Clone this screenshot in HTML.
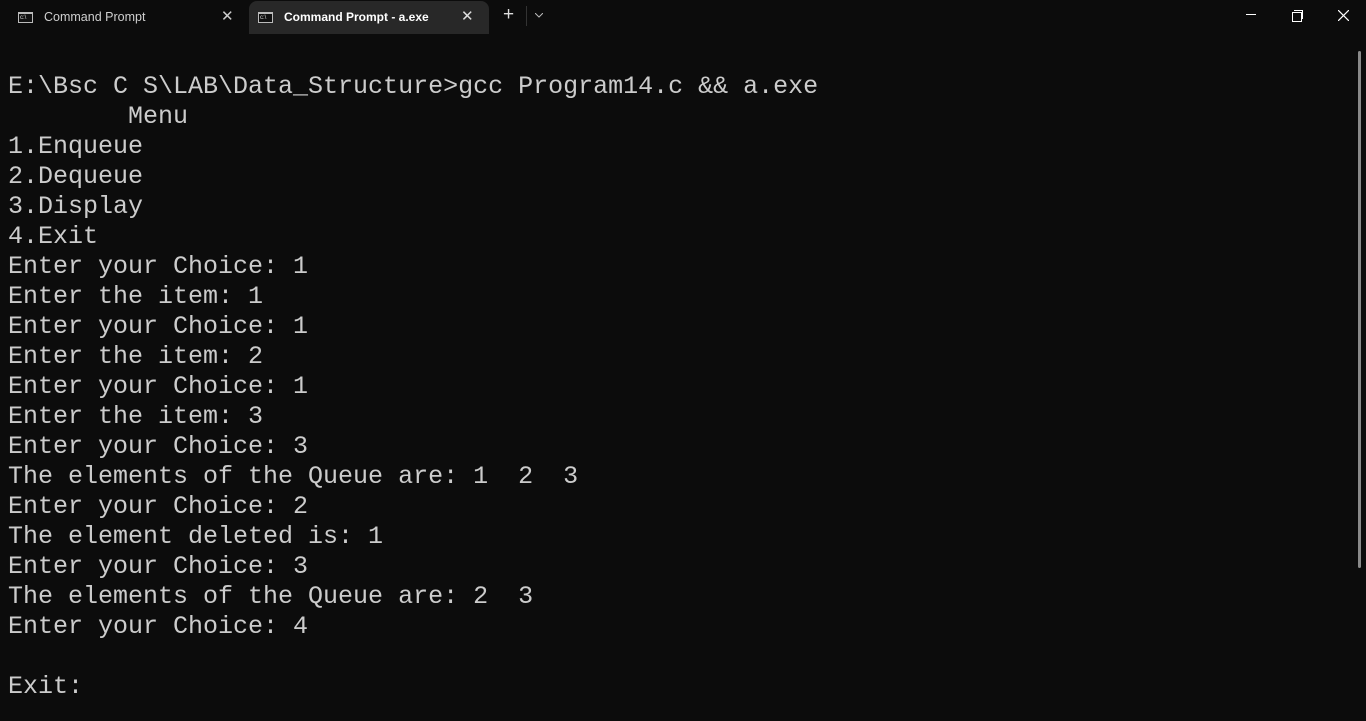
<!DOCTYPE html>
<html><head><style>
html,body{margin:0;padding:0;width:1366px;height:721px;background:#0c0c0c;overflow:hidden;font-family:"Liberation Sans",sans-serif}
.bar{position:absolute;top:0;left:0;width:1366px;height:34px;background:#0c0c0c}
.tab{position:absolute;top:1px;height:33px;color:#cfcfcf;font-size:12.5px;line-height:32px}
.tab.active{background:#282828;border-radius:8px 8px 0 0;color:#fff}
.ic{position:absolute;top:11px;width:15px;height:11px;border:1px solid #bbb;border-top-width:2px;background:#111;box-sizing:border-box}
.ic:after{content:"c:\\";position:absolute;left:1px;top:-12px;font-size:6px;color:#ddd}
pre{position:absolute;left:8px;top:72px;margin:0;font-family:"Liberation Mono",monospace;font-size:25px;line-height:30px;color:#cccccc;letter-spacing:0}
.sb{position:absolute;left:1358px;top:51px;width:3px;height:517px;background:#8a8a8a;border-radius:2px}
</style></head><body>
<div class="bar">
 <div class="tab" style="left:0;width:248px"><div class="ic" style="left:18px"></div><span style="position:absolute;left:44px">Command Prompt</span><span style="position:absolute;left:221px;font-size:15px;color:#ccc">✕</span></div>
 <div class="tab active" style="left:249px;width:240px"><div class="ic" style="left:9px"></div><span style="position:absolute;left:35px;font-weight:bold;font-size:12px">Command Prompt - a.exe</span><span style="position:absolute;left:212px;font-size:15px;color:#ddd">✕</span></div>
 <span style="position:absolute;left:503px;top:4px;color:#ddd;font-size:19px">+</span>
 <div style="position:absolute;left:526px;top:6px;width:1px;height:20px;background:#333"></div>
 <svg style="position:absolute;left:535px;top:13px" width="8" height="5"><path d="M0 0L4 4L8 0" stroke="#bbb" fill="none"/></svg>
 <div style="position:absolute;left:1246px;top:14px;width:10px;height:1px;background:#fff"></div>
 <div style="position:absolute;left:1292px;top:12px;width:8px;height:8px;border:1px solid #fff"></div>
 <div style="position:absolute;left:1294px;top:10px;width:8px;height:8px;border-top:1px solid #fff;border-right:1px solid #fff"></div>
 <svg style="position:absolute;left:1338px;top:10px" width="11" height="11"><path d="M0 0L11 11M11 0L0 11" stroke="#fff" stroke-width="1.2"/></svg>
</div>
<pre>E:\Bsc C S\LAB\Data_Structure>gcc Program14.c &amp;&amp; a.exe
        Menu
1.Enqueue
2.Dequeue
3.Display
4.Exit
Enter your Choice: 1
Enter the item: 1
Enter your Choice: 1
Enter the item: 2
Enter your Choice: 1
Enter the item: 3
Enter your Choice: 3
The elements of the Queue are: 1  2  3
Enter your Choice: 2
The element deleted is: 1
Enter your Choice: 3
The elements of the Queue are: 2  3
Enter your Choice: 4

Exit:</pre>
<div class="sb"></div>
</body></html>
